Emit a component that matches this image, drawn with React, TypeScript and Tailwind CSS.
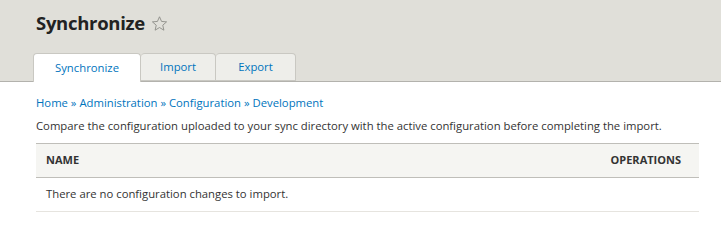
const tabs = [
  { label: "Synchronize", active: true, w: "w-[108px]" },
  { label: "Import", active: false, w: "w-[75px]" },
  { label: "Export", active: false, w: "w-[80px]" },
];

const crumbs = ["Home", "Administration", "Configuration", "Development"];

function Star() {
  return (
    <svg width="17" height="17" viewBox="0 0 24 24" className="ml-[6px] mt-[1px]">
      <path
        d="M12 2.5l2.9 6.6 7.1.6-5.4 4.7 1.6 7-6.2-3.7-6.2 3.7 1.6-7L2 9.7l7.1-.6z"
        fill="none"
        stroke="#8e8e88"
        strokeWidth="1.3"
        strokeLinejoin="round"
      />
    </svg>
  );
}

export default function App() {
  return (
    <div className="w-[721px] h-[242px] bg-white font-['Open_Sans',sans-serif] text-[#333]">
      <div className="bg-[#e0dfd9] border-b border-[#b3b2ad] h-[82px] px-[33px] flex flex-col">
        <div className="flex items-center pl-[3px] pt-[2px] h-[43px]">
          <h1 className="text-[18.5px] font-bold tracking-[-0.3px] text-[#222]">Synchronize</h1>
          <Star />
        </div>
        <div className="flex mt-auto -mb-px">
          {tabs.map((t) =>
            t.active ? (
              <div
                key={t.label}
                className={`${t.w} h-[29px] flex items-center justify-center bg-white border border-b-0 border-[#c9c8c2] rounded-t-[4px] text-[11.3px] text-[#0074bd]`}
              >
                {t.label}
              </div>
            ) : (
              <div
                key={t.label}
                className={`${t.w} h-[28px] flex items-center justify-center bg-[#eeeeea] border border-l-0 border-[#c9c8c2] rounded-t-[4px] text-[11.3px] text-[#0074bd]`}
              >
                {t.label}
              </div>
            )
          )}
        </div>
      </div>
      <div className="pl-[36px] pr-[22px] pt-[13px]">
        <div className="text-[11.3px] text-[#0074bd] leading-[16px]">
          {crumbs.map((c, i) => (
            <span key={c}>
              {i > 0 && <span> » </span>}
              {c}
            </span>
          ))}
        </div>
        <p className="text-[11.3px] leading-[16px] mt-[7px]">
          Compare the configuration uploaded to your sync directory with the active configuration before completing the import.
        </p>
        <table className="w-full mt-[9px] border-collapse">
          <thead>
            <tr className="bg-[#f5f5f2] border-t border-b border-[#bfbeb9]">
              <th className="h-[34px] text-left pl-[10px] text-[11px] font-bold uppercase text-[#333]">Name</th>
              <th className="text-right pr-[18px] text-[11px] font-bold uppercase text-[#333]">Operations</th>
            </tr>
          </thead>
          <tbody>
            <tr className="border-b border-[#e6e4df]">
              <td colSpan={2} className="h-[34px] pl-[10px] text-[11.3px]">
                There are no configuration changes to import.
              </td>
            </tr>
          </tbody>
        </table>
      </div>
    </div>
  );
}
